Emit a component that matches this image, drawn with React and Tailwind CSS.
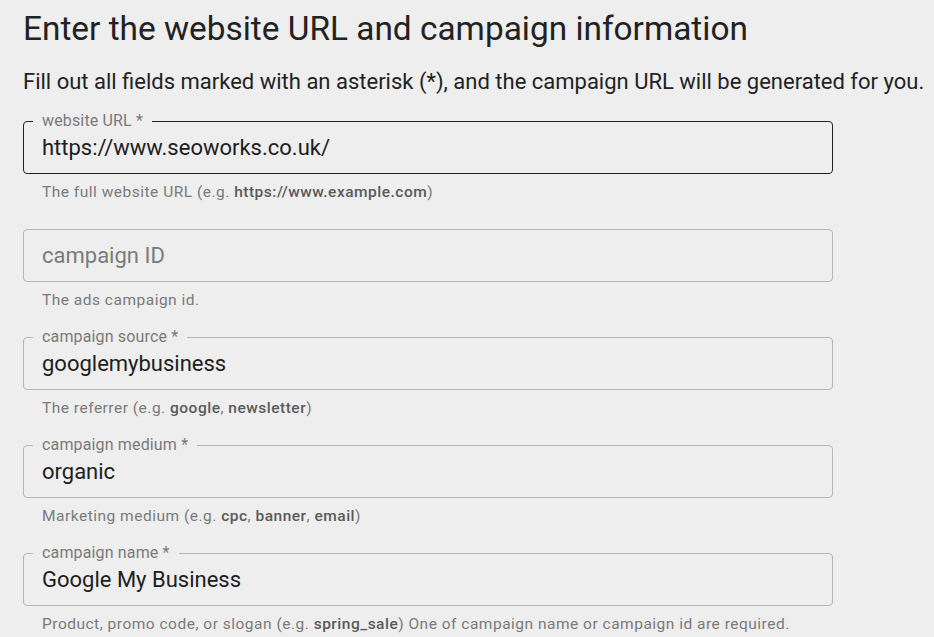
import React from "react";

function Field({ label, value, placeholder, focused }) {
  return (
    <div
      className={`relative h-[53px] w-[810px] rounded-[4px] border ${
        focused ? "border-[#222222]" : "border-[#b5b5b5]"
      } flex items-center px-[18px]`}
    >
      {label && (
        <span className="absolute left-[9px] top-[-11px] bg-[#eeeeee] px-[9px] text-[16px] leading-[20px] tracking-[0.15px] text-[#7a7a7a]">
          {label}
        </span>
      )}
      {value ? (
        <span className="text-[22px] leading-[28px] text-[#202020]">{value}</span>
      ) : (
        <span className="text-[22px] leading-[28px] text-[#7a7a7a]">{placeholder}</span>
      )}
    </div>
  );
}

function Helper({ children }) {
  return (
    <div className="mt-[8px] pl-[19px] text-[15.5px] leading-[20px] tracking-[0.5px] text-[#7a7a7a]">
      {children}
    </div>
  );
}

const B = ({ children }) => <span className="font-medium text-[#5a5a5a]">{children}</span>;

export default function App() {
  return (
    <div
      className="min-h-[637px] w-full bg-[#eeeeee] pl-[23px] pt-[9px]"
      style={{ fontFamily: "Roboto, 'Noto Sans', sans-serif" }}
    >
      <h1 className="text-[33.4px] leading-[40px] font-normal text-[#222222]">
        Enter the website URL and campaign information
      </h1>
      <p className="mt-[19px] text-[22px] leading-[28px] text-[#222222]">
        Fill out all fields marked with an asterisk (*), and the campaign URL will be generated for you.
      </p>
      <div className="mt-[25px] flex flex-col gap-[27px]">
        <div>
          <Field label="website URL *" value="https://www.seoworks.co.uk/" focused />
          <Helper>
            The full website URL (e.g. <B>https://www.example.com</B>)
          </Helper>
        </div>
        <div>
          <Field placeholder="campaign ID" />
          <Helper>The ads campaign id.</Helper>
        </div>
        <div>
          <Field label="campaign source *" value="googlemybusiness" />
          <Helper>
            The referrer (e.g. <B>google</B>, <B>newsletter</B>)
          </Helper>
        </div>
        <div>
          <Field label="campaign medium *" value="organic" />
          <Helper>
            Marketing medium (e.g. <B>cpc</B>, <B>banner</B>, <B>email</B>)
          </Helper>
        </div>
        <div>
          <Field label="campaign name *" value="Google My Business" />
          <Helper>
            Product, promo code, or slogan (e.g. <B>spring_sale</B>) One of campaign name or campaign id are
            required.
          </Helper>
        </div>
      </div>
    </div>
  );
}
